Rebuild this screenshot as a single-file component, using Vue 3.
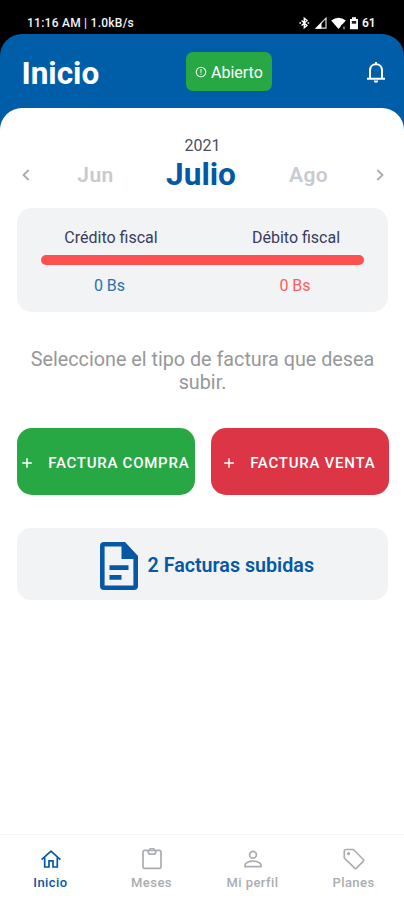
<script setup>
const actions = [
  { label: 'FACTURA COMPRA', kind: 'buy' },
  { label: 'FACTURA VENTA', kind: 'sell' },
]
const tabs = [
  { label: 'Inicio', icon: 'home', active: true },
  { label: 'Meses', icon: 'clipboard' },
  { label: 'Mi perfil', icon: 'person' },
  { label: 'Planes', icon: 'tag' },
]
</script>

<template>
  <div class="screen">
    <div class="status">
      <span class="clock">11:16 AM | 1.0kB/s</span>
      <svg class="sys" viewBox="0 0 62 14" fill="none">
        <path d="M3.6 4.4l5.4 5-2.7 2.4V2.2L9 4.6l-5.4 5M1.4 7h1.6M9.6 7h1.6" stroke="#fff" stroke-width="1.4" />
        <path d="M18.2 12.2H28V2.2z" stroke="#ddd" stroke-width="1.2" />
        <path d="M17.5 12.7h6V6.5z" fill="#fff" />
        <path d="M33.2 4.5q7.3-5.3 14.6 0L40.5 13z" fill="#fff" />
        <path d="M43.5 9l4 4" stroke="#000" stroke-width="1.8" />
        <path d="M46 10.5v2.7" stroke="#bbb" stroke-width="1.2" />
        <path d="M52 3h2V1.2h4V3h2v10.2h-8z" fill="#fff" />
        <path d="M53.8 5h4.4v2.7h-4.4z" fill="#222" />
      </svg>
      <span class="battery">61</span>
    </div>

    <header class="header">
      <h1>Inicio</h1>
      <span class="badge">
        <svg viewBox="0 0 12 12" fill="none" stroke="#e9fbea" stroke-width="1.1">
          <circle cx="6" cy="6" r="4.8" />
          <path d="M6 3.1v3.6M6 7.6v1.2" />
        </svg>
        Abierto
      </span>
      <svg class="bell" viewBox="0 0 20 24" fill="none" stroke="#fff" stroke-width="2">
        <path d="M4 18.2V10.5C4 6.6 6.5 4.2 10 4.2s6 2.4 6 6.3v7.7" />
        <path d="M1 18.8h18M10 4.5V2" />
        <path d="M7.8 20.6h4.4a2.2 2.2 0 0 1-4.4 0z" fill="#fff" stroke="none" />
      </svg>
    </header>

    <main class="sheet">
      <div class="year">2021</div>
      <div class="months">
        <svg class="chev" viewBox="0 0 8 12"><path d="M6.7 1L1.5 6l5.2 5" /></svg>
        <span class="near">Jun</span>
        <strong>Julio</strong>
        <span class="near">Ago</span>
        <svg class="chev" viewBox="0 0 8 12"><path d="M1.3 1l5.2 5-5.2 5" /></svg>
      </div>

      <section class="fiscal">
        <div class="pair"><span>Crédito fiscal</span><span>Débito fiscal</span></div>
        <div class="bar"></div>
        <div class="pair amounts"><span>0 Bs</span><span>0 Bs</span></div>
      </section>

      <p class="hint">Seleccione el tipo de factura que desea subir.</p>

      <div class="actions">
        <button v-for="a in actions" :key="a.kind" :class="a.kind">
          <svg viewBox="0 0 10 10"><path d="M5 .2v9.6M.2 5h9.6" /></svg>
          <span>{{ a.label }}</span>
        </button>
      </div>

      <section class="uploaded">
        <svg viewBox="0 0 38 48">
          <path
            fill-rule="evenodd"
            d="M4 0H25L38 14V44a4 4 0 0 1-4 4H4a4 4 0 0 1-4-4V4a4 4 0 0 1 4-4zM4.6 4.4V43.4H33.4V17H21.5V4.4zM9.5 23.2H28.5V28H9.5zM9.5 33H21.5V37.8H9.5z"
          />
        </svg>
        <span>2 Facturas subidas</span>
      </section>
    </main>

    <nav class="tabs">
      <div v-for="t in tabs" :key="t.icon" class="tab" :class="{ active: t.active }">
        <svg viewBox="0 0 22 22">
          <g v-if="t.icon === 'home'">
            <path d="M1.6 11.6L11 3.2l9.4 8.4" />
            <path d="M4.7 9.5V19H9v-6.2h4V19h4.3V9.5" />
          </g>
          <g v-else-if="t.icon === 'clipboard'">
            <rect x="2" y="2.4" width="18" height="18" rx="1.8" />
            <path d="M6.6 2.6l1.6 3.6h5.6l1.6-3.6" />
            <path d="M8.8 2.4a2.2 2.2 0 0 1 4.4 0" />
          </g>
          <g v-else-if="t.icon === 'person'">
            <circle cx="11" cy="6.8" r="3.4" />
            <path d="M3 18.6V17c0-2.4 4.4-3.8 8-3.8s8 1.4 8 3.8v1.6z" />
          </g>
          <g v-else>
            <path d="M1.3 3.2a1.7 1.7 0 0 1 1.7-1.7h7.4L20.4 11.5a1.2 1.2 0 0 1 0 1.7l-7 7a1.2 1.2 0 0 1-1.7 0L1.3 10z" />
            <circle cx="5.6" cy="5.6" r=".8" />
          </g>
        </svg>
        <span>{{ t.label }}</span>
      </div>
    </nav>
  </div>
</template>

<style>
body {
  background: #000;
}
</style>

<style scoped>
.screen {
  display: flex;
  flex-direction: column;
  width: 404px;
  height: 900px;
  overflow: hidden;
  background: linear-gradient(#000 0 60px, #005ea9 60px);
  font-family: Roboto, sans-serif;
}
.status {
  display: flex;
  align-items: center;
  flex: none;
  height: 34.4px;
  padding: 11px 27px 0 27px;
  box-sizing: border-box;
  color: #f4f4f4;
  font-size: 12px;
  font-weight: 500;
}
.clock {
  flex: 1;
  letter-spacing: 0.25px;
}
.sys {
  width: 62px;
  height: 14px;
}
.battery {
  width: 15px;
  margin-left: 2px;
  font-weight: 600;
}
.header {
  display: flex;
  align-items: center;
  flex: none;
  height: 74px;
  padding: 0 18px 0 21.5px;
  box-sizing: border-box;
  border-radius: 22px 22px 0 0;
  background: #005ea9;
  color: #fff;
}
h1 {
  flex: none;
  width: 164.5px;
  margin: 5px 0 0;
  font-size: 31.5px;
  line-height: 38px;
  font-weight: 700;
}
.badge {
  display: flex;
  align-items: center;
  gap: 4px;
  width: 86px;
  height: 38.5px;
  padding: 2px 0 0 9px;
  box-sizing: border-box;
  border-radius: 7px;
  background: #28a745;
  font-size: 16px;
}
.badge svg {
  width: 12px;
  height: 12px;
}
.bell {
  width: 20px;
  height: 24px;
  margin: 1px 0 0 auto;
}
.sheet {
  flex: 1;
  padding: 28px 16px 0 17px;
  border-radius: 22px 22px 0 0;
  background: #fff;
}
.year {
  color: #4c4e60;
  font-size: 16px;
  line-height: 20px;
  text-align: center;
}
.months {
  display: grid;
  grid-template-columns: 17px 123px 88px 127px 16px;
  align-items: center;
  height: 36px;
  text-align: center;
}
.months strong {
  color: #0658a4;
  font-size: 31.6px;
  line-height: 38px;
  font-weight: 700;
}
.near {
  color: #c7cacf;
  font-size: 21px;
  font-weight: 600;
  letter-spacing: 0.4px;
}
.chev {
  width: 8px;
  height: 12px;
  justify-self: center;
  fill: none;
  stroke: #a9acb0;
  stroke-width: 1.8;
}
.fiscal {
  height: 103.4px;
  margin-top: 16px;
  padding: 19.2px 24px 0;
  box-sizing: border-box;
  border-radius: 15px;
  background: #f1f3f5;
}
.pair {
  display: flex;
  justify-content: space-between;
  color: #3a3b5b;
  font-size: 16px;
  line-height: 20px;
}
.pair span {
  width: 140px;
  text-align: center;
}
.pair span:last-child {
  width: 136px;
}
.bar {
  height: 10px;
  margin: 7.4px 0 11.2px;
  border-radius: 5px;
  background: #ff5050;
}
.amounts {
  color: #2f70aa;
}
.amounts span:first-child {
  width: 137px;
}
.amounts span:last-child {
  width: 138px;
  color: #ff5c5c;
}
.hint {
  margin: 36px 0 0;
  color: #96989a;
  font-size: 19.75px;
  line-height: 23px;
  text-align: center;
}
.actions {
  display: grid;
  grid-template-columns: 177.5px 177.5px;
  gap: 16.5px;
  margin-top: 33.8px;
}
.actions button {
  display: flex;
  align-items: center;
  justify-content: center;
  gap: 16px;
  height: 67.4px;
  padding: 3px 0 0;
  border: 0;
  border-radius: 15px;
  background: #28a745;
  color: #fff;
  font: 500 15px Roboto, sans-serif;
  letter-spacing: 0.75px;
  white-space: nowrap;
}
.actions .sell {
  background: #dc3545;
}
.actions svg {
  flex: none;
  width: 10px;
  height: 10px;
  stroke: #fff;
  stroke-width: 1.5;
}
.uploaded {
  display: flex;
  align-items: center;
  gap: 9.5px;
  height: 72px;
  margin-top: 33px;
  padding: 4px 0 0 83px;
  box-sizing: border-box;
  border-radius: 14px;
  background: #f1f3f5;
  color: #0658a4;
  font-size: 19.7px;
  font-weight: 600;
}
.uploaded svg {
  width: 38px;
  height: 48px;
  fill: #0658a4;
}
.uploaded span {
  margin-top: -1px;
}
.tabs {
  display: grid;
  grid-template-columns: repeat(4, 1fr);
  flex: none;
  height: 66px;
  box-sizing: border-box;
  border-top: 1px solid #f4f5f5;
  background: #fff;
}
.tab {
  display: flex;
  flex-direction: column;
  align-items: center;
  padding-top: 13px;
  color: #aaadb1;
  font-size: 13px;
  line-height: 16px;
  font-weight: 500;
  letter-spacing: 0.45px;
}
.tab svg {
  width: 22px;
  height: 22px;
  margin-bottom: 5px;
  fill: none;
  stroke: currentColor;
  stroke-width: 1.7;
}
.tab.active {
  color: #0658a4;
}
</style>
